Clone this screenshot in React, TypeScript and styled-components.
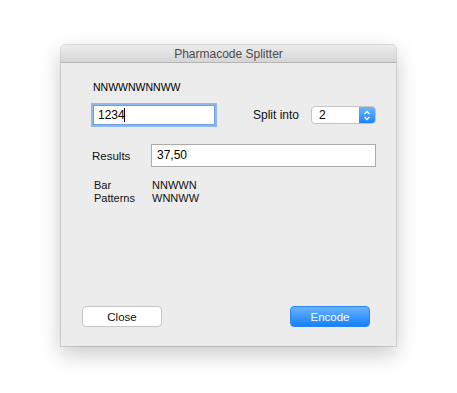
import React, { useState } from 'react';
import styled, { createGlobalStyle } from 'styled-components';

const GlobalStyle = createGlobalStyle`
  html, body {
    margin: 0;
    padding: 0;
    background: #ffffff;
  }
  body {
    font-family: "Liberation Sans", Arial, sans-serif;
    color: #111;
  }
`;

const Page = styled.div`
  width: 457px;
  height: 393px;
  overflow: hidden;
  padding: 45px 0 0 61px;
  box-sizing: border-box;
`;

const Window = styled.div`
  width: 335px;
  height: 301px;
  display: flex;
  flex-direction: column;
  background: #ececec;
  border-radius: 4px 4px 0 0;
  box-shadow: 0 0 0 1px rgba(0, 0, 0, 0.12), 0 8px 22px rgba(0, 0, 0, 0.22);
`;

const TitleBar = styled.div`
  height: 17px;
  flex: 0 0 auto;
  display: flex;
  align-items: center;
  justify-content: center;
  background: linear-gradient(#ececec, #d6d6d6);
  border-bottom: 1px solid #b3b3b3;
  border-radius: 4px 4px 0 0;
  font-size: 12px;
  color: #4b4b4b;
`;

const Body = styled.div`
  flex: 1;
  display: flex;
  flex-direction: column;
  padding: 18px 20px 19px 0;
`;

const Code = styled.div`
  padding-left: 32px;
  font-size: 10.5px;
  line-height: 13px;
  color: #000;
`;

const Row = styled.div<{ $top: number; $left: number }>`
  display: flex;
  align-items: center;
  margin-top: ${({ $top }) => $top}px;
  padding-left: ${({ $left }) => $left}px;
`;

const Label = styled.span<{ $width?: number; $size?: number }>`
  font-size: ${({ $size }) => $size ?? 11.5}px;
  color: #111;
  ${({ $width }) => ($width ? `width: ${$width}px; flex: 0 0 auto;` : '')}
`;

const NumberInput = styled.input`
  width: 122px;
  height: 20px;
  box-sizing: border-box;
  border: 1px solid #6f9fe0;
  box-shadow: 0 0 0 2px #90b8ee;
  outline: none;
  padding: 0 4px;
  font-family: "Liberation Sans", Arial, sans-serif;
  font-size: 12px;
  color: #000;
  background: #fff;
`;

const Caret = styled.span`
  display: inline-block;
  width: 1px;
  height: 14px;
  background: #000;
`;

const InputWrap = styled.div`
  position: relative;
  display: flex;

  & > ${Caret} {
    position: absolute;
    left: 31px;
    top: 3px;
  }
`;

const SplitGroup = styled.div`
  margin-left: auto;
  display: flex;
  align-items: center;
  gap: 12px;
`;

const Select = styled.div`
  width: 65px;
  height: 18px;
  box-sizing: border-box;
  display: flex;
  background: #fff;
  border: 1px solid #c4c4c4;
  border-radius: 4px;
  overflow: hidden;
`;

const SelectValue = styled.span`
  flex: 1;
  padding-left: 7px;
  font-size: 12px;
  line-height: 16px;
  color: #000;
`;

const Stepper = styled.span`
  width: 16px;
  display: flex;
  align-items: center;
  justify-content: center;
  background: linear-gradient(#6db4fb, #1f84fb);
`;

const ResultField = styled.div`
  flex: 1;
  height: 23px;
  box-sizing: border-box;
  border: 1px solid #ababab;
  background: #fff;
  padding-left: 5px;
  font-size: 12px;
  line-height: 21px;
  color: #000;
`;

const Patterns = styled.div`
  display: grid;
  grid-template-columns: 58px auto;
  margin-top: 12px;
  padding-left: 33px;
  font-size: 11px;
  line-height: 13px;
  color: #111;
`;

const Buttons = styled.div`
  margin-top: auto;
  display: flex;
  justify-content: space-between;
  padding: 0 6px 0 21px;
`;

const Button = styled.button<{ $primary?: boolean }>`
  width: 80px;
  height: 21px;
  box-sizing: border-box;
  border-radius: 4px;
  font-family: "Liberation Sans", Arial, sans-serif;
  font-size: 11.5px;
  padding: 0;
  cursor: pointer;
  color: ${({ $primary }) => ($primary ? '#fff' : '#111')};
  border: 1px solid ${({ $primary }) => ($primary ? '#2a86f6' : '#c6c6c6')};
  background: ${({ $primary }) =>
    $primary ? 'linear-gradient(#6ab2fb, #1581fd)' : '#fff'};
`;

const App: React.FC = () => {
  const [value, setValue] = useState('1234');

  return (
    <Page>
      <GlobalStyle />
      <Window>
        <TitleBar>Pharmacode Splitter</TitleBar>
        <Body>
          <Code>NNWWNWNNWW</Code>
          <Row $top={11} $left={32}>
            <InputWrap>
              <NumberInput value={value} onChange={(e) => setValue(e.target.value)} />
              <Caret />
            </InputWrap>
            <SplitGroup>
              <Label $size={12}>Split into</Label>
              <Select>
                <SelectValue>2</SelectValue>
                <Stepper>
                  <svg width="8" height="11" viewBox="0 0 8 11" fill="none">
                    <path d="M1.5 4 L4 1.5 L6.5 4" stroke="#fff" strokeWidth="1.3" />
                    <path d="M1.5 7 L4 9.5 L6.5 7" stroke="#fff" strokeWidth="1.3" />
                  </svg>
                </Stepper>
              </Select>
            </SplitGroup>
          </Row>
          <Row $top={19} $left={31}>
            <Label $width={59}>Results</Label>
            <ResultField>37,50</ResultField>
          </Row>
          <Patterns>
            <span>Bar</span>
            <span>NNWWN</span>
            <span>Patterns</span>
            <span>WNNWW</span>
          </Patterns>
          <Buttons>
            <Button>Close</Button>
            <Button $primary>Encode</Button>
          </Buttons>
        </Body>
      </Window>
    </Page>
  );
};

export default App;
